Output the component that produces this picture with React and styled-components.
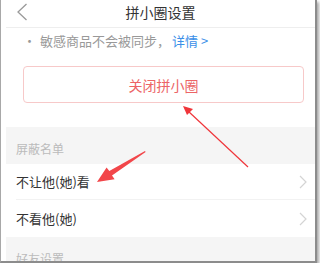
import styled, { createGlobalStyle } from "styled-components";

const GlobalStyle = createGlobalStyle`
  * { box-sizing: border-box; }
  body {
    margin: 0;
    background: #fff;
    font-family: "Noto Sans CJK SC", "Noto Sans", sans-serif;
  }
`;

const Frame = styled.div`
  position: relative;
  width: 317px;
  height: 263px;
  overflow: hidden;
  border-left: 1px solid #a8a8a8;
  border-right: 2px solid #8c8c8c;
  border-bottom: 2px solid #8c8c8c;
  box-shadow: 2px 2px 3px rgba(0, 0, 0, 0.35);
  background: #fff;
`;

const Screen = styled.div`
  margin-left: 5px;
  display: flex;
  flex-direction: column;
`;

const Header = styled.div`
  height: 28px;
  display: flex;
  align-items: center;
  justify-content: center;
  position: relative;
  border-bottom: 1px solid #eeeeee;
  padding-bottom: 3px;
  font-size: 14px;
  color: #333;
`;

const Back = styled.svg`
  position: absolute;
  left: 10px;
  top: 3px;
`;

const Tip = styled.div`
  height: 25px;
  display: flex;
  align-items: center;
  padding-left: 17px;
  font-size: 13px;
  color: #999;
  span.dot {
    margin-right: 4px;
  }
  a {
    color: #3b8fe8;
    text-decoration: none;
    margin-left: 2px;
  }
`;

const ButtonWrap = styled.div`
  padding: 13px 11px 24px 17px;
`;

const CloseButton = styled.div`
  height: 37px;
  border: 1px solid #f7c9c9;
  border-radius: 4px;
  display: flex;
  align-items: center;
  justify-content: center;
  font-size: 14px;
  color: #ec6466;
`;

const SectionLabel = styled.div`
  height: ${(p) => p.h}px;
  background: #f5f5f5;
  display: flex;
  align-items: flex-end;
  padding: 0 0 ${(p) => p.pb}px 10px;
  font-size: 12px;
  color: #bbb;
`;

const Row = styled.div`
  height: ${(p) => p.h}px;
  display: flex;
  align-items: center;
  justify-content: space-between;
  margin-left: 10px;
  padding-right: 8px;
  font-size: 13px;
  color: #333;
  border-bottom: ${(p) => (p.line ? "1px solid #f2f2f2" : "none")};
`;

const Overlay = styled.svg`
  position: absolute;
  left: 0;
  top: 0;
  pointer-events: none;
`;

const Chevron = () => (
  <svg width="8" height="14" viewBox="0 0 8 14">
    <path d="M1 1 L7 7 L1 13" fill="none" stroke="#d4d4d4" strokeWidth="1.2" />
  </svg>
);

export default function App() {
  return (
    <>
      <GlobalStyle />
      <Frame>
        <Screen>
          <Header>
            <Back width="12" height="18" viewBox="0 0 12 18">
              <path d="M10.5 1 L2 9 L10.5 17" fill="none" stroke="#9a9a9a" strokeWidth="1.3" />
            </Back>
            拼小圈设置
          </Header>
          <Tip>
            <span className="dot">•</span>敏感商品不会被同步，<a href="#">详情 &gt;</a>
          </Tip>
          <ButtonWrap>
            <CloseButton>关闭拼小圈</CloseButton>
          </ButtonWrap>
          <SectionLabel h={37} pb={7}>屏蔽名单</SectionLabel>
          <Row h={36} line>
            不让他(她)看
            <Chevron />
          </Row>
          <Row h={37}>
            不看他(她)
            <Chevron />
          </Row>
          <SectionLabel h={30} pb={0}>好友设置</SectionLabel>
        </Screen>
        <Overlay width="317" height="263" viewBox="0 0 317 263">
          <line x1="247" y1="167" x2="187" y2="111" stroke="#f0353a" strokeWidth="1.2" />
          <polygon points="182,106 192,109 186,115" fill="#f0353a" />
          <polygon
            points="96,182 105.6,167.5 108.3,171 144,151 144.6,152 111,175.5 113.6,179.3"
            fill="#f2464a"
          />
        </Overlay>
      </Frame>
    </>
  );
}
